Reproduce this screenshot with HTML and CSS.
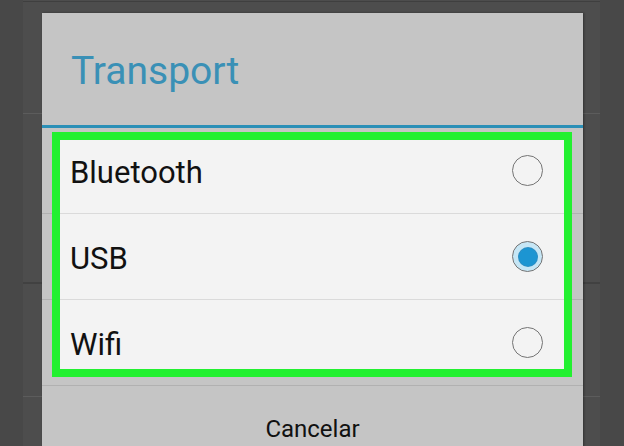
FILE: index.html
```html
<!DOCTYPE html>
<html lang="es">
<head>
<meta charset="utf-8">
<title>Transport</title>
<link rel="stylesheet" href="styles.css">
</head>
<body>
<div class="screen">
  <div class="backdrop">
    <div class="bl bl1"></div>
    <div class="bl bl2"></div>
    <div class="bl bl3"></div>
    <div class="bl bl4"></div>
  </div>
  <div class="dialog">
    <div class="header"><h1 class="title">Transport</h1></div>
    <ul class="options">
      <li class="option"><span class="label">Bluetooth</span><span class="radio"></span></li>
      <li class="option"><span class="label">USB</span><span class="radio checked"></span></li>
      <li class="option"><span class="label">Wifi</span><span class="radio"></span></li>
    </ul>
    <div class="actions"><span class="cancel">Cancelar</span></div>
    <div class="highlight"></div>
  </div>
</div>
</body>
</html>
```
FILE: styles.css
```css
* { box-sizing: border-box; }
html, body { margin: 0; padding: 0; }
body {
  width: 624px;
  height: 446px;
  overflow: hidden;
  background: #595959;
  font-family: Roboto, "Noto Sans", sans-serif;
}
.screen {
  position: relative;
  width: 624px;
  height: 446px;
  overflow: hidden;
}
.backdrop {
  margin: 0 24px 0 23px;
  height: 446px;
  background: #5f5f5f;
}
.bl { border-bottom: 1px solid #727272; }
.bl1 { height: 2px; border-bottom-color: #4e4e4e; }
.bl2 { height: 112px; }
.bl3 { height: 170px; border-bottom: 2px solid #505050; }
.bl4 { height: 113px; }

.dialog {
  position: absolute;
  left: 42px;
  top: 13px;
  width: 541px;
  height: 460px;
  background: #f3f3f3;
  box-shadow: 1px 0 2px rgba(0,0,0,0.35);
}
.header {
  height: 115px;
  padding: 36px 0 0 29px;
  border-bottom: 3px solid #36b2e2;
}
.title {
  margin: 0;
  font-size: 39px;
  line-height: 44px;
  font-weight: 400;
  color: #48b2e0;
}
.options {
  list-style: none;
  margin: 0;
  padding: 0;
}
.option {
  height: 86px;
  border-bottom: 1px solid #dadada;
  display: flex;
  align-items: center;
  justify-content: space-between;
  padding: 0 40px 0 28px;
}
.label {
  font-size: 31px;
  line-height: 36px;
  color: #111;
  padding-top: 4px;
}
.radio {
  width: 31px;
  height: 31px;
  border-radius: 50%;
  border: 1.5px solid #747474;
  background: transparent;
  display: flex;
  align-items: center;
  justify-content: center;
}
.radio.checked {
  background: #c6e6f5;
}
.radio.checked::after {
  content: "";
  width: 18px;
  height: 18px;
  border-radius: 50%;
  background: #1c95d2;
  box-shadow: 0 0 0 1px #2a8ec4;
}
.actions {
  padding-top: 29px;
  text-align: center;
}
.cancel {
  font-size: 24px;
  line-height: 28px;
  color: #151515;
}
.highlight {
  position: absolute;
  left: 10px;
  top: 119px;
  width: 520px;
  height: 245px;
  border: 8px solid #22f030;
  box-shadow: 0 0 0 1200px rgba(0,0,0,0.19);
  pointer-events: none;
}
```
